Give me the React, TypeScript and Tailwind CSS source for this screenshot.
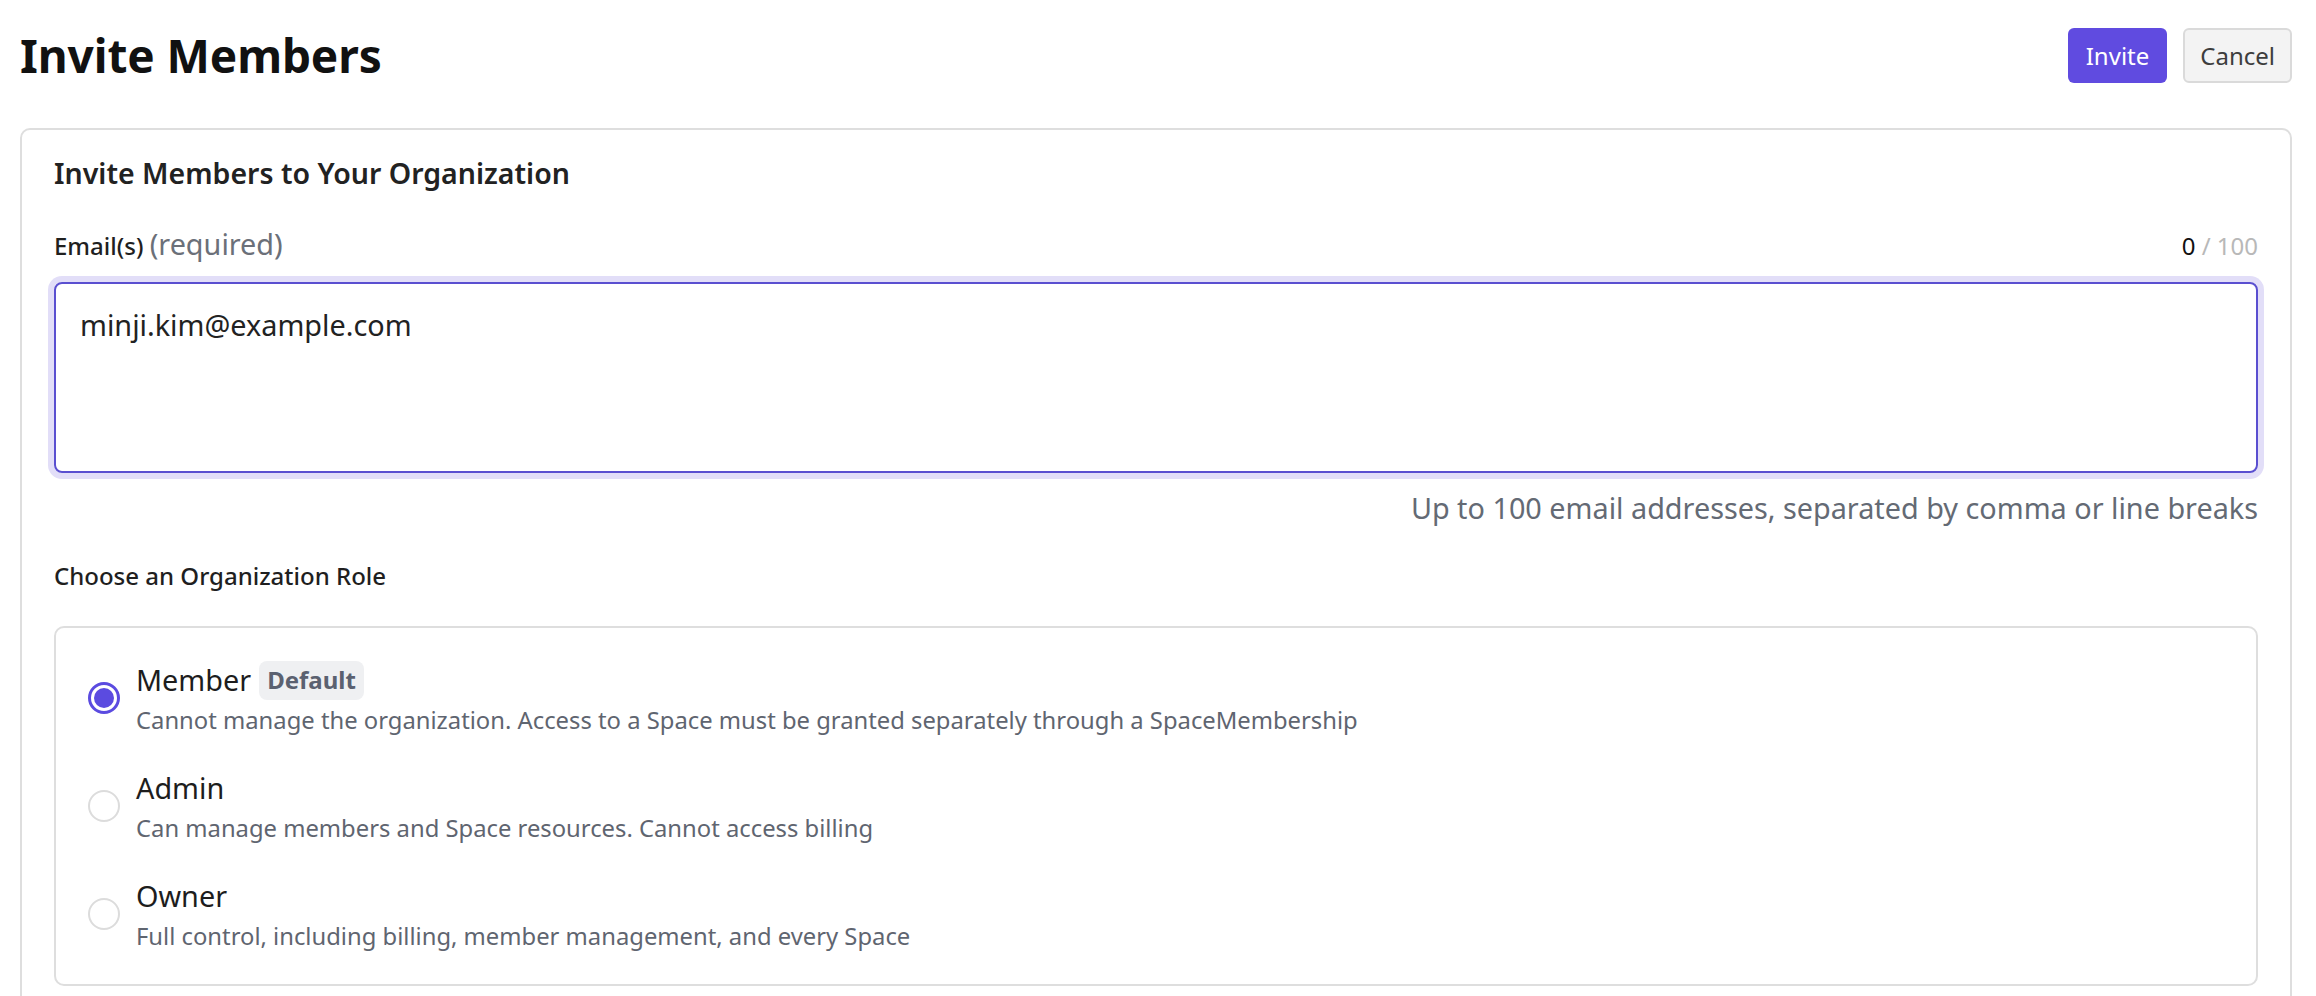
import React, { useState } from 'react';

type Role = {
  id: string;
  name: string;
  description: string;
  isDefault?: boolean;
};

const roles: Role[] = [
  {
    id: 'member',
    name: 'Member',
    description: 'Cannot manage the organization. Access to a Space must be granted separately through a SpaceMembership',
    isDefault: true,
  },
  {
    id: 'admin',
    name: 'Admin',
    description: 'Can manage members and Space resources. Cannot access billing',
  },
  {
    id: 'owner',
    name: 'Owner',
    description: 'Full control, including billing, member management, and every Space',
  },
];

function Radio({ checked }: { checked: boolean }) {
  if (checked) {
    return (
      <span className="flex h-[32px] w-[32px] shrink-0 items-center justify-center rounded-full border-[3px] border-[#5b4be0] bg-white">
        <span className="h-[20px] w-[20px] rounded-full bg-[#5b4be0]" />
      </span>
    );
  }
  return <span className="h-[32px] w-[32px] shrink-0 rounded-full border-2 border-[#dcdcdc] bg-white" />;
}

export default function App() {
  const [emails, setEmails] = useState('minji.kim@example.com');
  const [role, setRole] = useState('member');

  return (
    <div className="min-h-screen bg-white font-['Noto_Sans',sans-serif] text-[#1d1d1d]">
      {/* Header */}
      <div className="flex items-center justify-between pl-[20px] pr-[24px] pt-[27px]">
        <h1 className="text-[46px] font-bold leading-[57.6px] tracking-[-0.1px] text-[#111]">Invite Members</h1>
        <div className="flex gap-[16px]">
          <button className="h-[55px] rounded-[6px] bg-[#604be0] px-[18px] text-[24px] text-white">Invite</button>
          <button className="h-[55px] rounded-[6px] border-2 border-[#dadada] bg-[#f3f3f3] px-[15px] text-[24px] text-[#3d3d3d]">
            Cancel
          </button>
        </div>
      </div>

      {/* Card */}
      <div className="ml-[20px] mr-[24px] mt-[43px] rounded-[10px] border-2 border-[#dedede] px-[32px] pb-[32px] pt-[24px]">
        <h2 className="text-[28.5px] font-semibold leading-[38.4px] text-[#222]">Invite Members to Your Organization</h2>

        <div className="mt-[30px] flex items-baseline justify-between leading-[43.2px]">
          <label className="text-[24px] font-medium text-[#1f1f1f]">
            Email(s) <span className="text-[28.8px] font-normal text-[#6b7079]">(required)</span>
          </label>
          <span className="text-[24px] text-[#111]">
            0 <span className="text-[#b8b8b8]">/ 100</span>
          </span>
        </div>

        <textarea
          value={emails}
          onChange={(e) => setEmails(e.target.value)}
          className="mt-[15px] block h-[191px] w-full resize-none rounded-[8px] border-2 border-[#5a4fd0] px-[24px] py-[19px] text-[28.8px] leading-[43.2px] text-[#222] outline-none ring-[6px] ring-[#e2def8]"
        />

        <p className="mt-[13px] text-right text-[28.8px] leading-[43.2px] text-[#646a74]">
          Up to 100 email addresses, separated by comma or line breaks
        </p>

        <div className="mt-[29px] text-[24px] font-medium leading-[36px] text-[#1f1f1f]">Choose an Organization Role</div>

        <div className="mt-[32px] flex flex-col gap-[28.8px] rounded-[10px] border-2 border-[#dedede] py-[30px] pl-[32px] pr-[30px]">
          {roles.map((r) => (
            <div key={r.id} className="flex cursor-pointer items-center gap-[16px]" onClick={() => setRole(r.id)}>
              <Radio checked={role === r.id} />
              <div>
                <div className="flex items-center gap-[8px] text-[28.8px] leading-[43.2px] text-[#1d1d1d]">
                  {r.name}
                  {r.isDefault && (
                    <span className="rounded-[8px] bg-[#eff0f2] px-[8px] py-[1.5px] text-[24px] font-bold leading-[36px] text-[#5b6170]">
                      Default
                    </span>
                  )}
                </div>
                <div className="text-[23.8px] leading-[36px] text-[#5f6570]">{r.description}</div>
              </div>
            </div>
          ))}
        </div>
      </div>
    </div>
  );
}
